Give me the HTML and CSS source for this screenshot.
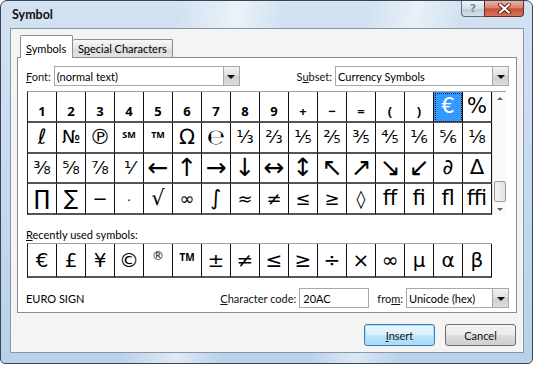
FILE: index.html
```html
<!DOCTYPE html>
<html>
<head>
  <meta charset="utf-8">
  <title>Symbol</title>
  <link rel="stylesheet" href="styles.css">
</head>
<body>
  <div class="window">
    <div class="titlebar">
      <span class="title">Symbol</span>
      <div class="caption">
        <span class="help">?</span>
        <span class="close">
          <svg width="15" height="11" viewBox="0 0 15 11">
            <path d="M3 1.5 L12 9.5 M12 1.5 L3 9.5" stroke="#5a1d12" stroke-width="4" stroke-linecap="round"/>
            <path d="M3 1.5 L12 9.5 M12 1.5 L3 9.5" stroke="#fff" stroke-width="2.2" stroke-linecap="round"/>
          </svg>
        </span>
      </div>
    </div>

    <div class="client">
      <div class="tabs">
        <div class="tab active"><u>S</u>ymbols</div>
        <div class="tab">S<u>p</u>ecial Characters</div>
      </div>

      <div class="panel">
        <div class="pickers">
          <div class="field">
            <span class="lbl"><u>F</u>ont:</span>
            <div class="select font-select"><span class="val">(normal text)</span><span class="drop"></span></div>
          </div>
          <div class="field">
            <span class="lbl">S<u>u</u>bset:</span>
            <div class="select subset-select"><span class="val">Currency Symbols</span><span class="drop"></span></div>
          </div>
        </div>

        <div class="chart">
          <div class="grid">
            <span class="cell num">1</span><span class="cell num">2</span><span class="cell num">3</span><span class="cell num">4</span>
            <span class="cell num">5</span><span class="cell num">6</span><span class="cell num">7</span><span class="cell num">8</span>
            <span class="cell num">9</span><span class="cell num">+</span><span class="cell num">&minus;</span><span class="cell num">=</span>
            <span class="cell num">(</span><span class="cell num">)</span><span class="cell sel">&euro;</span><span class="cell big">%</span>

            <span class="cell big">&#8467;</span><span class="cell">&#8470;</span><span class="cell big">&#8471;</span><span class="cell sup">SM</span>
            <span class="cell sup">TM</span><span class="cell big">&#8486;</span><span class="cell big">&#8494;</span><span class="cell">&#8531;</span>
            <span class="cell">&#8532;</span><span class="cell">&#8533;</span><span class="cell">&#8534;</span><span class="cell">&#8535;</span>
            <span class="cell">&#8536;</span><span class="cell">&#8537;</span><span class="cell">&#8538;</span><span class="cell">&#8539;</span>

            <span class="cell">&#8540;</span><span class="cell">&#8541;</span><span class="cell">&#8542;</span><span class="cell">&#8543;</span>
            <span class="cell arrowc">&larr;</span><span class="cell arrowc">&uarr;</span><span class="cell arrowc">&rarr;</span><span class="cell arrowc">&darr;</span>
            <span class="cell arrowc">&harr;</span><span class="cell arrowc">&#8597;</span><span class="cell arrowc">&#8598;</span><span class="cell arrowc">&#8599;</span>
            <span class="cell arrowc">&#8600;</span><span class="cell arrowc">&#8601;</span><span class="cell big">&part;</span><span class="cell big">&#8710;</span>

            <span class="cell big">&prod;</span><span class="cell big">&sum;</span><span class="cell">&minus;</span><span class="cell small">&middot;</span>
            <span class="cell big">&radic;</span><span class="cell">&infin;</span><span class="cell big">&int;</span><span class="cell">&asymp;</span>
            <span class="cell">&ne;</span><span class="cell">&le;</span><span class="cell">&ge;</span><span class="cell">&loz;</span>
            <span class="cell big">&#64256;</span><span class="cell big">&#64257;</span><span class="cell big">&#64258;</span><span class="cell big">&#64259;</span>
          </div>
          <div class="scrollbar">
            <span class="arrow up"></span>
            <span class="track"></span>
            <span class="thumb"></span>
            <span class="arrow down"></span>
          </div>
        </div>

        <div class="recent-label"><u>R</u>ecently used symbols:</div>
        <div class="grid recent">
          <span class="cell">&euro;</span><span class="cell">&pound;</span><span class="cell">&yen;</span><span class="cell big">&copy;</span>
          <span class="cell sup reg">&reg;</span><span class="cell sup">TM</span><span class="cell">&plusmn;</span><span class="cell">&ne;</span>
          <span class="cell">&le;</span><span class="cell">&ge;</span><span class="cell">&divide;</span><span class="cell">&times;</span>
          <span class="cell">&infin;</span><span class="cell">&micro;</span><span class="cell">&alpha;</span><span class="cell">&beta;</span>
        </div>

        <div class="code-row">
          <span class="char-name">EURO SIGN</span>
          <span class="lbl code-lbl"><u>C</u>haracter code:</span>
          <div class="input">20AC</div>
          <span class="lbl from-lbl">fro<u>m</u>:</span>
          <div class="select from-select"><span class="val">Unicode (hex)</span><span class="drop"></span></div>
        </div>
      </div>

      <div class="buttons">
        <button class="btn default"><u>I</u>nsert</button>
        <button class="btn">Cancel</button>
      </div>
    </div>
  </div>
</body>
</html>
```

FILE: styles.css
```css
body {
  margin: 0;
  background: #fff;
  font-family: Lato, "Noto Sans", sans-serif;
  font-size: 11px;
  color: #000;
}

/* glass frame */
.window {
  width: 533px;
  height: 364px;
  box-sizing: border-box;
  border: 1px solid #36465a;
  border-radius: 7px 7px 5px 5px;
  background:
    linear-gradient(100deg, rgba(255,255,255,0) 30%, rgba(255,255,255,0.55) 40%, rgba(255,255,255,0) 48%, rgba(255,255,255,0) 62%, rgba(255,255,255,0.5) 70%, rgba(255,255,255,0) 78%),
    linear-gradient(180deg, #d3e2f1, #c4d8ec 60%, #b9d0e7);
  display: flex;
  flex-direction: column;
}
.titlebar {
  height: 28px;
  display: flex;
  align-items: flex-start;
}
.title {
  flex: 1;
  margin: 6px 0 0 11px;
  font-weight: bold;
  font-size: 12.5px;
  color: #111;
}
.caption {
  display: flex;
  margin-right: 8px;
}
.help, .close {
  height: 16px;
  box-sizing: border-box;
  display: flex;
  align-items: center;
  justify-content: center;
  border: 1px solid #5c6b80;
  border-top: none;
}
.help {
  width: 23px;
  border-right: none;
  border-radius: 0 0 0 4px;
  background: linear-gradient(#eef3f9, #d6e0ec 50%, #bccbdc 52%, #d3dfeb);
  color: #7d8a9a;
  font: bold 11px "DejaVu Sans", sans-serif;
}
.close {
  width: 40px;
  border-color: #6b2b20;
  border-radius: 0 0 4px 0;
  background: linear-gradient(#eab2a4, #d98270 45%, #c65037 52%, #d5735b);
}

/* client area */
.client {
  flex: 1;
  margin: 0 8px 10px 9px;
  border: 1px solid #8397ae;
  background: #f4f4f4;
  padding: 6px 6px 6px 6px;
  display: flex;
  flex-direction: column;
}
.tabs {
  display: flex;
  align-items: flex-end;
  height: 22px;
  margin-left: 3px;
}
.tab {
  height: 18px;
  box-sizing: border-box;
  padding: 2px 5px 0 5px;
  border: 1px solid #898c95;
  border-bottom: none;
  border-left: none;
  background: linear-gradient(#f7f7f7, #e6e6e6 50%, #d9d9d9 51%, #e3e3e3);
  border-radius: 2px 2px 0 0;
}
.tab.active {
  width: 53px;
  height: 23px;
  margin-bottom: -1px;
  padding: 6px 0 0 5px;
  border-left: 1px solid #898c95;
  background: #fff;
  position: relative;
  z-index: 1;
}
.panel {
  border: 1px solid #898c95;
  background: #fff;
  padding: 8px 7px 4px 8px;
  display: flex;
  flex-direction: column;
}

.pickers {
  display: flex;
  justify-content: space-between;
  height: 20px;
}
.field {
  display: flex;
  align-items: center;
}
.lbl {
  color: #111;
}
.select {
  height: 20px;
  box-sizing: border-box;
  border: 1px solid #a4a8b0;
  background: #fff;
  display: flex;
  align-items: center;
}
.select .val {
  flex: 1;
  padding-left: 2px;
}
.drop {
  width: 16px;
  height: 18px;
  box-sizing: border-box;
  border-left: 1px solid #a4a8b0;
  background: linear-gradient(#f2f2f2, #dedede 50%, #cfcfcf 51%, #dcdcdc);
  display: flex;
  align-items: center;
  justify-content: center;
}
.drop::after {
  content: "";
  border-left: 4px solid transparent;
  border-right: 4px solid transparent;
  border-top: 4px solid #111;
  margin-top: 1px;
}
.font-select {
  width: 186px;
  margin-left: 3px;
}
.subset-select {
  width: 174px;
  margin-left: 3px;
}

/* symbol chart */
.chart {
  margin: 5px 0 0 1px;
  width: 479px;
  height: 124px;
  box-sizing: border-box;
  display: flex;
  border-top: 1px solid #a0a0a0;
  border-left: 1px solid #222;
}
.grid {
  display: grid;
  grid-template-columns: repeat(16, 29px);
  grid-auto-rows: 30.75px;
}
.cell {
  box-sizing: border-box;
  border-right: 1px solid #111;
  border-bottom: 2px solid #555;
  display: flex;
  align-items: center;
  justify-content: center;
  font-family: "DejaVu Sans", sans-serif;
  font-size: 18px;
  line-height: 1;
  color: #000;
}
.cell.big {
  font-size: 21px;
}
.cell.small {
  font-size: 13px;
  padding-top: 3px;
}
.cell.arrowc {
  font-size: 25px;
}
.cell.num {
  font-family: "Noto Sans", sans-serif;
  font-weight: bold;
  font-size: 13px;
  align-items: flex-end;
  padding-bottom: 3px;
}
.cell.sup {
  font-family: "Noto Sans", sans-serif;
  font-size: 9px;
  font-weight: bold;
  align-items: flex-start;
  padding-top: 7px;
}
.cell.sel {
  background: #3399ff;
  color: #fff;
  outline: 1px dotted #1a1a1a;
  outline-offset: -2px;
  font-size: 21px;
}

.scrollbar {
  width: 14px;
  display: flex;
  flex-direction: column;
  background: #fafafa;
  border-left: 1px solid #e4e4e4;
}
.arrow {
  height: 12px;
  display: flex;
  align-items: center;
  justify-content: center;
}
.arrow::after {
  content: "";
  border-left: 3px solid transparent;
  border-right: 3px solid transparent;
}
.arrow.up::after {
  border-bottom: 3px solid #606060;
}
.arrow.down::after {
  border-top: 3px solid #606060;
}
.track {
  flex: 1;
}
.thumb {
  height: 19px;
  margin: 0 0 1px 1px;
  border: 1px solid #9b9b9b;
  border-radius: 2px;
  background: linear-gradient(90deg, #f4f4f4, #e2e2e2);
}

.recent-label {
  margin-top: 12px;
  height: 16px;
  line-height: 16px;
}
.grid.recent {
  grid-auto-rows: 34px;
  margin-left: 1px;
  width: 465px;
  border-top: 1px solid #a0a0a0;
  border-left: 1px solid #222;
  box-sizing: border-box;
}
.recent .cell {
  font-size: 20px;
}
.recent .cell.sup {
  font-size: 10px;
  padding-top: 8px;
}
.recent .cell.reg {
  font-family: "DejaVu Sans", sans-serif;
  font-weight: normal;
  font-size: 12px;
  padding-top: 6px;
}

.code-row {
  margin-top: 10px;
  height: 20px;
  display: flex;
  align-items: center;
}
.char-name {
  flex: 1;
}
.input {
  width: 70px;
  height: 20px;
  box-sizing: border-box;
  margin-left: 3px;
  padding: 3px 0 0 3px;
  border: 1px solid #a4a8b0;
  background: #fff;
}
.from-lbl {
  margin-left: 8px;
}
.from-select {
  width: 103px;
  margin-left: 3px;
}

/* dialog buttons */
.buttons {
  margin-top: 11px;
  display: flex;
  justify-content: flex-end;
  gap: 10px;
  padding-right: 1px;
}
.btn {
  width: 71px;
  height: 22px;
  border: 1px solid #707070;
  border-radius: 3px;
  background: linear-gradient(#f2f2f2, #ebebeb 50%, #dddddd 51%, #cfcfcf);
  font-family: Lato, "Noto Sans", sans-serif;
  font-size: 11px;
  color: #111;
  padding: 0;
}
.btn.default {
  border-color: #3c7fb1;
  box-shadow: inset 0 0 0 1px #a8dcf4;
  background: linear-gradient(#eaf6fd, #d9f0fc 50%, #bee6fd 51%, #a7d9f5);
}
```
